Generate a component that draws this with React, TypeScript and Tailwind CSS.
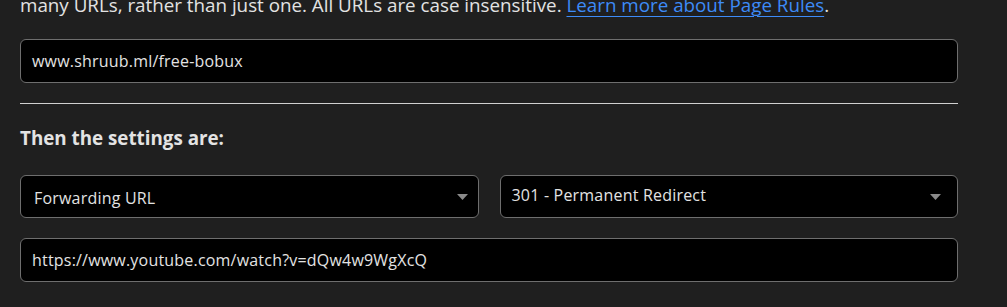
function Caret() {
  return (
    <svg width="11" height="6" viewBox="0 0 11 6" className="shrink-0">
      <path d="M0 0h11L5.5 6z" fill="#8a8a8a" />
    </svg>
  );
}

export default function App() {
  return (
    <div className="w-[1007px] h-[307px] overflow-hidden bg-[#1f1f1f] text-[#e3e3e3] font-['Open_Sans','Noto_Sans',sans-serif]">
      <div className="ml-[20px] w-[938px]">
        {/* tail of the description paragraph */}
        <p className="-mt-[8px] text-[18.8px] leading-[26px] whitespace-nowrap">
          many URLs, rather than just one. All URLs are case insensitive.{" "}
          <a href="#" className="text-[#3d8bf7] underline underline-offset-[4px] decoration-1">
            Learn more about Page Rules
          </a>
          .
        </p>

        <div className="mt-[21px] h-[44px] rounded-md border border-[#6e6e6e] bg-black flex items-center px-[11px] text-[16px] tracking-[0.2px]">
          www.shruub.ml/free-bobux
        </div>

        <div className="mt-[20px] h-px bg-[#d0d0d0]" />

        <h3 className="mt-[22px] text-[18.8px] font-bold leading-[24px]">Then the settings are:</h3>

        <div className="mt-[25px] grid grid-cols-2 gap-[21px]">
          <div className="h-[43px] rounded-md border border-[#6e6e6e] bg-black flex items-center justify-between pl-[13px] pr-[10px] text-[16px] tracking-[0.2px]">
            <span className="pt-[3px]">Forwarding URL</span>
            <Caret />
          </div>
          <div className="h-[43px] rounded-md border border-[#6e6e6e] bg-black flex items-center justify-between pl-[11px] pr-[16px] text-[16px] tracking-[0.2px]">
            <span className="pb-[3px]">301 - Permanent Redirect</span>
            <Caret />
          </div>
        </div>

        <div className="mt-[20px] h-[44px] rounded-md border border-[#6e6e6e] bg-black flex items-center px-[11px] text-[16px] tracking-[0.2px]">
          https://www.youtube.com/watch?v=dQw4w9WgXcQ
        </div>
      </div>
    </div>
  );
}
